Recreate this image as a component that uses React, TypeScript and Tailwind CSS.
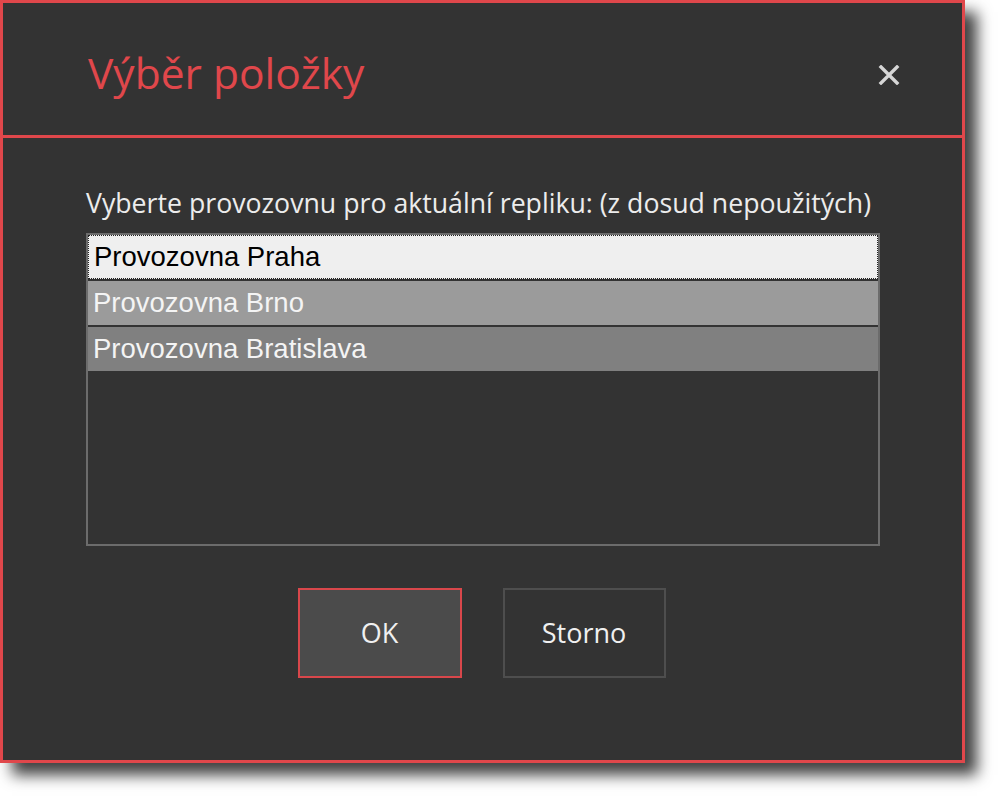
import React from "react";

export default function App() {
  const items = [
    { label: "Provozovna Praha", bg: "bg-[#efefef]", text: "text-black", focus: true },
    { label: "Provozovna Brno", bg: "bg-[#9b9b9b]", text: "text-[#f4f4f4]", focus: false },
    { label: "Provozovna Bratislava", bg: "bg-[#808080]", text: "text-[#f4f4f4]", focus: false },
  ];
  return (
    <div className="w-[1000px] h-[801px] bg-white">
      <div className="w-[965px] h-[763px] flex flex-col bg-[#333333] border-[3px] border-[#e0474b] shadow-[12px_12px_14px_rgba(0,0,0,0.75)]">
        <div className="h-[135px] shrink-0 flex items-center justify-between border-b-[3px] border-[#e0474b] pl-[85px] pr-[62px]">
          <span
            className="text-[42.5px] text-[#e0474b] leading-none pt-[8px]"
            style={{ fontFamily: '"Open Sans", "Noto Sans", sans-serif' }}
          >
            Výběr položky
          </span>
          <svg width="22" height="20" viewBox="0 0 22 20" className="mt-[12px]">
            <path d="M3 2 L19 18 M19 2 L3 18" stroke="#d6d6d6" strokeWidth="3.4" strokeLinecap="square" />
          </svg>
        </div>
        <div className="flex flex-col pl-[83px] pt-[51px]">
          <div
            className="text-[26.7px] leading-[28px] text-[#ececec] h-[44px] whitespace-nowrap"
            style={{ fontFamily: '"Open Sans", "Noto Sans", sans-serif' }}
          >
            Vyberte provozovnu pro aktuální repliku: (z dosud nepoužitých)
          </div>
          <div className="w-[794px] h-[313px] border-2 border-[#6c6c6c] flex flex-col gap-[2px]">
            {items.map((it) => (
              <div
                key={it.label}
                className={`h-[44px] shrink-0 flex items-center ${it.bg} ${it.text} ${
                  it.focus ? "border border-dotted border-[#222] pl-[5px]" : "pl-[5px]"
                }`}
                style={{ fontFamily: '"Liberation Sans", Arial, sans-serif' }}
              >
                <span className="text-[27.5px] leading-none">{it.label}</span>
              </div>
            ))}
          </div>
          <div className="flex justify-center gap-[41px] mt-[42px] pr-[85px]">
            <button
              className="w-[164px] h-[90px] bg-[#4b4b4b] border-2 border-[#d9474b] text-[#f0f0f0] text-[27px] flex items-center justify-center"
              style={{ fontFamily: '"Open Sans", "Noto Sans", sans-serif' }}
            >
              OK
            </button>
            <button
              className="w-[163px] h-[90px] bg-[#333333] border-2 border-[#4e4e4e] text-[#f0f0f0] text-[27px] flex items-center justify-center"
              style={{ fontFamily: '"Open Sans", "Noto Sans", sans-serif' }}
            >
              Storno
            </button>
          </div>
        </div>
      </div>
    </div>
  );
}
